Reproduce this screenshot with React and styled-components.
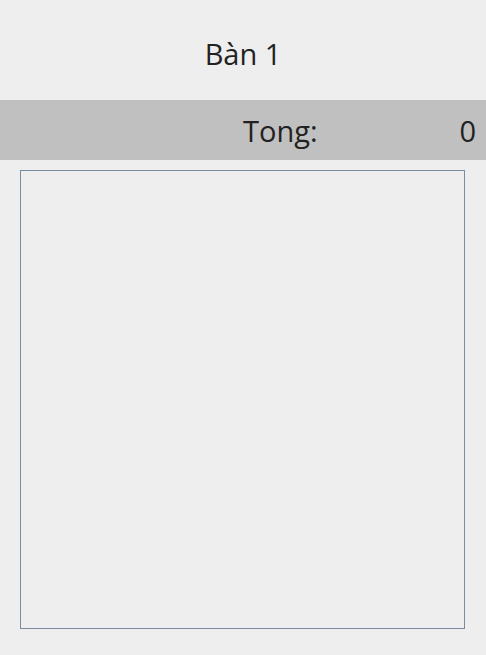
import React from "react";
import styled, { createGlobalStyle } from "styled-components";

const Global = createGlobalStyle`
  html, body { margin: 0; padding: 0; background: #eeeeee; }
  body { font-family: "Open Sans", "Noto Sans", sans-serif; color: #222; }
`;

const Page = styled.div`
  width: 486px;
  height: 655px;
  display: flex;
  flex-direction: column;
  background: #eeeeee;
`;

const Header = styled.div`
  height: 100px;
  display: flex;
  align-items: center;
  justify-content: center;
  font-size: 29px;
  padding-top: 6px;
  box-sizing: border-box;
`;

const TotalBar = styled.div`
  height: 60px;
  background: #c0c0c0;
  display: grid;
  grid-template-columns: 243px 1fr auto;
  align-items: center;
  font-size: 29px;
  padding-right: 10px;
  box-sizing: border-box;
`;

const Label = styled.span`
  grid-column: 2;
`;

const Value = styled.span`
  grid-column: 3;
`;

const ListBox = styled.div`
  margin: 10px 0 0 20px;
  width: 445px;
  height: 459px;
  box-sizing: border-box;
  border: 1px solid #7a8ca0;
  background: #eeeeee;
`;

export default function App() {
  return (
    <>
      <Global />
      <Page>
        <Header>Bàn 1</Header>
        <TotalBar>
          <Label>Tong:</Label>
          <Value>0</Value>
        </TotalBar>
        <ListBox />
      </Page>
    </>
  );
}
